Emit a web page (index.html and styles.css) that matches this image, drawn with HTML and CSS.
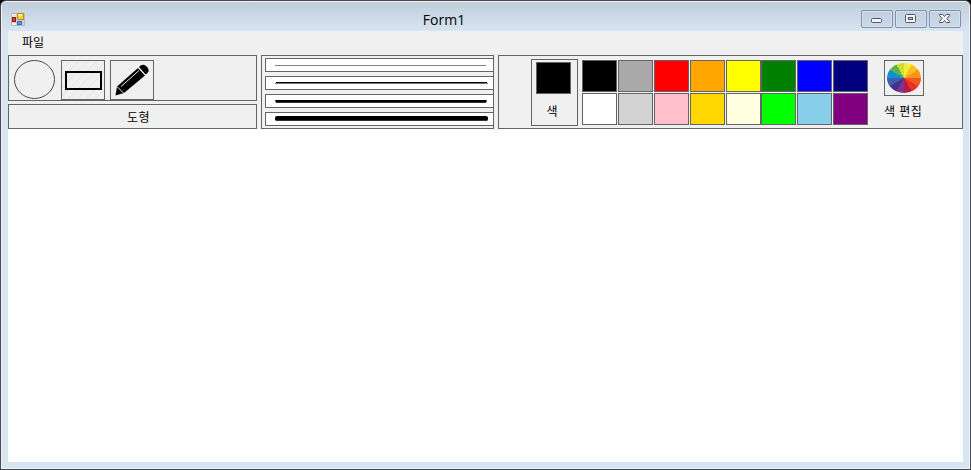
FILE: index.html
```html
<!DOCTYPE html>
<html lang="ko">
<head>
<meta charset="utf-8">
<title>Form1</title>
<link rel="stylesheet" href="styles.css">
</head>
<body>
<div class="window">
  <header class="titlebar">
    <svg class="app-icon" width="14" height="14" viewBox="0 0 14 14">
      <rect x=".5" y="1.500" width="13" height="12" fill="#d0d0cd" stroke="#b8babb"/>
      <rect x="1" y="2" width="4" height="3" fill="#e5e5e2"/>
      <rect x="6.5" y="1.5" width="6" height="6" fill="#fbd03f" stroke="#b98b18"/>
      <rect x="7" y="2" width="4" height="2" fill="#ffe992"/>
      <rect x="1.5" y="5.5" width="3" height="4" fill="#df3d2c" stroke="#8e1c17"/>
      <rect x="1" y="11" width="4" height="2" fill="#eee"/>
      <rect x="6.5" y="9.5" width="4" height="3" fill="#5b9bee" stroke="#376bc2"/>
    </svg>
    <h1 class="title">Form1</h1>
    <div class="controls">
      <button class="control" aria-label="Minimize"><svg width="30" height="16" viewBox="0 0 30 16"><rect x="9.5" y="7.5" width="10" height="4" rx="1" fill="#f3f3f3" stroke="#535666"/></svg></button>
      <button class="control" aria-label="Maximize"><svg width="30" height="16" viewBox="0 0 30 16"><rect x="9.5" y="3.5" width="10" height="8" rx="1" fill="#f3f3f3" stroke="#535666"/><rect x="12.5" y="6.5" width="4" height="2" fill="#b8c8dd" stroke="#535666"/></svg></button>
      <button class="control" aria-label="Close"><svg width="30" height="16" viewBox="0 0 30 16"><path d="M9.5 3.5h3.2l1.800 2 1.800-2h3.200v1l-2.700 3 2.700 3v1h-3.200l-1.800-2-1.800 2H9.500v-1l2.700-3-2.700-3z" fill="#f3f3f3" stroke="#535666"/></svg></button>
    </div>
  </header>
  <main class="client">
    <nav class="menu"><span>파일</span></nav>
    <div class="toolbar">
      <section class="shapes">
        <div class="shape-tools">
          <svg class="circle-tool" width="41" height="39" viewBox="0 0 41 39"><ellipse cx="20.5" cy="19.5" rx="20" ry="19" fill="none" stroke="#484848"/></svg>
          <button class="tool"><svg width="42" height="38" viewBox="0 0 42 38">
            <path d="M0 8L8 0M0 17L17 0M0 26L26 0M0 35L35 0M6 38L42 2M15 38L42 11M24 38L42 20M33 38L42 29" stroke="#e4e4e4"/>
            <rect x="4" y="11" width="35" height="17" fill="none" stroke="#000" stroke-width="2"/>
          </svg></button>
          <button class="tool"><svg width="42" height="38" viewBox="0 0 42 38">
            <path d="M4.500 34.500l1.500-9L27 7l7 7.500L13 32z"/>
            <path d="M28 6l1.500-1.500q3-1.800 5.500.5l2 2q1.500 2.500-.5 5L34.500 13.500z"/>
            <path d="M6 25.500l7 7M27 6l7.500 8.500" stroke="#f0f0f0"/>
            <path d="M10 25.500L28 9.500" stroke="#f0f0f0"/>
          </svg></button>
        </div>
        <div class="shape-label">도형</div>
      </section>
      <section class="lines">
        <div class="line"><svg width="228" height="12" viewBox="0 0 228 12"><path d="M9 6.500h211" stroke="#858585"/></svg></div>
        <div class="line"><svg width="228" height="12" viewBox="0 0 228 12"><path d="M9 6.500h213" stroke="#777"/><path d="M10 5.500h211" stroke="#000"/></svg></div>
        <div class="line"><svg width="228" height="12" viewBox="0 0 228 12"><path d="M9 6h212" stroke="#666" stroke-width="2"/><path d="M10 6h210" stroke="#000" stroke-width="2"/><path d="M10 7.500h210" stroke="#333"/></svg></div>
        <div class="line"><svg width="228" height="12" viewBox="0 0 228 12"><rect x="9" y="3" width="213" height="5" rx="2"/><path d="M10 7.500h210" stroke="#333"/></svg></div>
      </section>
      <section class="colors">
        <button class="current"><span class="current-swatch"></span><span class="current-label">색</span></button>
        <div class="palette">
          <i class="swatch black"></i><i class="swatch darkgray"></i><i class="swatch red"></i><i class="swatch orange"></i><i class="swatch yellow"></i><i class="swatch green"></i><i class="swatch blue"></i><i class="swatch navy"></i>
          <i class="swatch white"></i><i class="swatch lightgray"></i><i class="swatch pink"></i><i class="swatch gold"></i><i class="swatch lightyellow"></i><i class="swatch lime"></i><i class="swatch skyblue"></i><i class="swatch purple"></i>
        </div>
        <div class="edit"><button class="edit-button"><span class="wheel"></span></button><span class="edit-label">색 편집</span></div>
      </section>
    </div>
    <div class="canvas"></div>
  </main>
</div>
</body>
</html>
```
FILE: styles.css
```css
* { box-sizing: border-box; }
body {
  margin: 0;
  background: #000;
  color: #000;
  font: 12px "Noto Sans CJK KR", sans-serif;
}
svg { display: block; }
button { margin: 0; padding: 0; background: none; color: inherit; font: inherit; }
.window {
  width: 971px;
  height: 470px;
  padding: 0 7px 7px;
  border: 1px solid #4a484b;
  border-radius: 6px 6px 0 0;
  background: linear-gradient(#bfccda, #d7e4f1 30px);
  box-shadow: inset 0 0 0 1px #edf3f9;
}
.titlebar {
  display: grid;
  grid-template-columns: 120px 1fr 120px;
  height: 30px;
}
.app-icon { margin: 11px 0 0 3px; }
.title {
  margin: 8px 0 0;
  padding-right: 83px;
  font: 14px/21px "Open Sans", sans-serif;
  text-align: center;
}
.controls { display: flex; justify-content: flex-end; gap: 2px; padding: 9px 2px 0 0; }
.control {
  width: 32px;
  height: 18px;
  border: 1px solid #8090ae;
  border-radius: 2px;
  background: linear-gradient(#c3d0df, #cbd8e7);
  box-shadow: inset 0 0 0 1px #d5e0ec;
}
.client { background: #fff; height: 431px; }
.menu { height: 24px; padding-left: 14px; background: #f0f0f0; line-height: 22px; }
.toolbar {
  display: grid;
  grid-template-columns: 249px 233px 465px;
  gap: 4px;
  height: 74px;
  background: #f0f0f0;
}
.shapes { display: grid; grid-template-rows: 46px 25px; gap: 3px; }
.shape-tools { display: flex; border: 1px solid #646464; padding: 4px 0 0 5px; }
.circle-tool { margin-right: 6px; }
.tool { width: 44px; height: 40px; margin-right: 5px; border: 1px solid #646464; }
.shape-label {
  border: 1px solid #646464;
  padding-left: 12px;
  letter-spacing: 0.5px;
  line-height: 23px;
  text-align: center;
}
.lines {
  display: flex;
  flex-direction: column;
  gap: 4px;
  border: 1px solid #646464;
  border-right: 0;
  padding: 2px 0 0 3px;
  box-shadow: inset -1px 0 #646464;
}
.line { width: 229px; height: 14px; border: 1px solid #646464; background: #fff; }
.colors { display: flex; border: 1px solid #646464; padding-left: 32px; }
.current {
  display: flex;
  flex-direction: column;
  align-items: center;
  width: 47px;
  height: 67px;
  margin: 3px 4px 0 0;
  padding: 2px 2px 0 0;
  border: 1px solid #646464;
}
.current-swatch { width: 35px; height: 32px; border: 1px solid #646464; background: #000; }
.current-label { margin: 8px 3px 0 0; line-height: 18px; }
.palette {
  display: grid;
  grid-template-columns: 36px 36px 36px 36px 35px 36px 36px 35px;
  grid-template-rows: 32px 32px;
  row-gap: 1px;
  height: 65px;
  margin: 4px 16px 0 0;
}
.swatch { width: 35px; height: 32px; border: 1px solid #646464; }
.black { background: #000; }
.darkgray { background: #a9a9a9; }
.red { background: #f00; }
.orange { background: #ffa500; }
.yellow { background: #ff0; }
.green { background: #008000; }
.blue { background: #00f; }
.navy { background: #000080; }
.white { background: #fff; }
.lightgray { background: #d3d3d3; }
.pink { background: #ffc0cb; }
.gold { background: #ffd700; }
.lightyellow { background: #ffffe0; }
.lime { background: #0f0; }
.skyblue { background: #87ceeb; }
.purple { background: #800080; }
.edit { display: flex; flex-direction: column; padding-top: 4px; }
.edit-button { width: 40px; height: 36px; padding: 2px; border: 1px solid #646464; }
.wheel {
  display: block;
  width: 34px;
  height: 30px;
  border-radius: 50%;
  background: conic-gradient(#f5ec3b 0 30deg, #fcc017 0 60deg, #f7941e 0 90deg, #f15523 0 120deg, #eb3023 0 150deg, #a91d46 0 180deg, #7d3390 0 210deg, #472f8f 0 240deg, #3f5dac 0 270deg, #0694d2 0 300deg, #62b146 0 330deg, #cedd37 0);
}
.edit-label { margin-top: 6px; letter-spacing: 0.4px; line-height: 18px; white-space: nowrap; }
```
